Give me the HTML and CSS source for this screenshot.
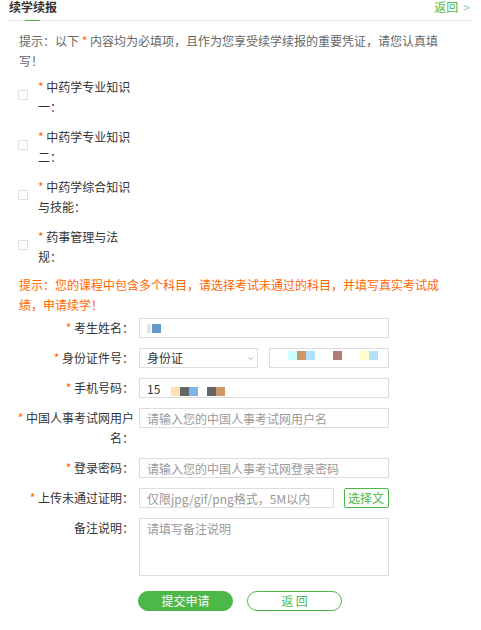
FILE: index.html
```html
<!DOCTYPE html>
<html lang="zh-CN">
<head>
  <meta charset="UTF-8">
  <title>续学续报</title>
  <link rel="stylesheet" href="styles.css">
</head>
<body>

<div class="page">
  <div class="head">
    <h2 class="head-title">续学续报</h2>
    <a class="head-back" href="#">返回 <span class="head-arrow">&gt;</span></a>
  </div>

  <p class="tip">提示：以下 <span class="star">*</span> 内容均为必填项，且作为您享受续学续报的重要凭证，请您认真填写！</p>

  <!-- Subjects to retake -->
  <ul class="subjects">
    <li class="subject">
      <input class="subject-check" type="checkbox" id="sub1">
      <label class="subject-label" for="sub1"><span class="star">*</span> 中药学专业知识一：</label>
    </li>
    <li class="subject">
      <input class="subject-check" type="checkbox" id="sub2">
      <label class="subject-label" for="sub2"><span class="star">*</span> 中药学专业知识二：</label>
    </li>
    <li class="subject">
      <input class="subject-check" type="checkbox" id="sub3">
      <label class="subject-label" for="sub3"><span class="star">*</span> 中药学综合知识与技能：</label>
    </li>
    <li class="subject">
      <input class="subject-check" type="checkbox" id="sub4">
      <label class="subject-label" for="sub4"><span class="star">*</span> 药事管理与法规：</label>
    </li>
  </ul>

  <p class="tip tip-warn">提示：您的课程中包含多个科目，请选择考试未通过的科目，并填写真实考试成绩，申请续学！</p>

  <form class="form">
    <div class="row">
      <label class="row-label"><span class="star">*</span> 考生姓名：</label>
      <div class="row-field masked">
        <input class="input" type="text">
        <span class="mosaic mosaic-name"><span class="c-faint"></span><span class="c-blue"></span></span>
      </div>
    </div>

    <div class="row">
      <label class="row-label"><span class="star">*</span> 身份证件号：</label>
      <div class="row-field row-field-split">
        <div class="select-wrap">
          <select class="input select">
            <option>身份证</option>
          </select>
          <svg class="select-arrow" width="5" height="3" viewBox="0 0 5 3"><polyline points="0.3,0.3 2.5,2.5 4.7,0.3" fill="none" stroke="#999" stroke-width="0.8"/></svg>
        </div>
        <div class="masked masked-id">
          <input class="input" type="text">
          <span class="mosaic mosaic-id"><span class="c-cyan"></span><span class="c-tan"></span><span class="c-sky"></span><span></span><span></span><span class="c-mauve"></span><span></span><span></span><span class="c-cream"></span><span class="c-sky"></span></span>
        </div>
      </div>
    </div>

    <div class="row">
      <label class="row-label"><span class="star">*</span> 手机号码：</label>
      <div class="row-field masked">
        <input class="input" type="text" value="15">
        <span class="mosaic mosaic-phone"><span class="c-peach"></span><span class="c-gray"></span><span class="c-blue2"></span><span></span><span class="c-gray"></span><span class="c-tan"></span></span>
      </div>
    </div>

    <div class="row">
      <label class="row-label"><span class="star">*</span> 中国人事考试网用户名：</label>
      <div class="row-field">
        <input class="input" type="text" placeholder="请输入您的中国人事考试网用户名">
      </div>
    </div>

    <div class="row">
      <label class="row-label"><span class="star">*</span> 登录密码：</label>
      <div class="row-field">
        <input class="input" type="password" placeholder="请输入您的中国人事考试网登录密码">
      </div>
    </div>

    <div class="row">
      <label class="row-label"><span class="star">*</span> 上传未通过证明：</label>
      <div class="row-field">
        <input class="input input-file" type="text" placeholder="仅限jpg/gif/png格式，5M以内" readonly>
        <label class="btn-file">选择文件<input class="file-hidden" type="file"></label>
      </div>
    </div>

    <div class="row">
      <label class="row-label">备注说明：</label>
      <div class="row-field">
        <textarea class="input textarea" placeholder="请填写备注说明"></textarea>
      </div>
    </div>

    <div class="actions">
      <button class="btn btn-submit" type="button">提交申请</button>
      <button class="btn btn-back" type="button">返 回</button>
    </div>
  </form>
</div>

</body>
</html>
```

FILE: styles.css
```css
body {
  margin: 0;
  font-family: "Noto Sans CJK SC", "Liberation Sans", sans-serif;
  font-size: 12px;
  color: #333;
  background: #fff;
}
.page {
  padding: 0 9px;
}

/* Header */
.head {
  display: flex;
  justify-content: space-between;
  align-items: flex-start;
  height: 20px;
  border-bottom: 1px solid #e5e5e5;
}
.head-title {
  position: relative;
  margin: 0;
  font-size: 12px;
  line-height: 13px;
  font-weight: bold;
}
.head-title::after {
  content: "";
  position: absolute;
  left: 16px;
  bottom: -8px;
  width: 15px;
  height: 1px;
  background: #4cb847;
}
.head-back {
  display: flex;
  gap: 5px;
  margin-right: 2px;
  line-height: 13px;
  color: #4cb847;
  text-decoration: none;
}
.head-arrow {
  color: #8fcf8b;
}

/* Tips */
.tip {
  max-width: 425px;
  margin: 10px 0 0;
  padding: 0 10px;
  line-height: 20px;
  color: #666;
}
.tip-warn {
  margin-top: 8px;
  color: #ff6600;
}
.star {
  color: #ff6600;
}

/* Subjects */
.subjects {
  list-style: none;
  margin: 6px 0 0;
  padding: 0 0 0 9px;
}
.subject {
  display: flex;
  align-items: flex-start;
  gap: 10px;
  margin-bottom: 10px;
}
.subject:last-child {
  margin-bottom: 0;
}
.subject-check {
  appearance: none;
  box-sizing: border-box;
  width: 10px;
  height: 10px;
  margin: 13px 0 0;
  border: 1px solid #e0e0e0;
  background: #fff;
}
.subject-label {
  width: 100px;
  line-height: 20px;
}

/* Form */
.form {
  margin-top: 3px;
  padding-left: 5px;
}
.row {
  display: flex;
  gap: 5px;
  margin-bottom: 10px;
}
.row-label {
  flex: none;
  width: 120px;
  text-align: right;
  line-height: 20px;
}
.row-field {
  display: flex;
  gap: 10px;
  width: 250px;
}
.row-field-split {
  gap: 11px;
}
.input {
  box-sizing: border-box;
  width: 100%;
  height: 20px;
  margin: 0;
  padding: 0 7px;
  border: 1px solid #ddd;
  border-radius: 0;
  background: #fff;
  font: inherit;
  line-height: 18px;
  color: #333;
  outline: none;
}
.input::placeholder {
  color: #999;
}
.select-wrap {
  position: relative;
  flex: none;
  width: 119px;
}
.select {
  appearance: none;
}
.select-arrow {
  position: absolute;
  right: 5px;
  top: 9px;
}
.input-file {
  flex: none;
  width: 195px;
}
.btn-file {
  box-sizing: border-box;
  display: block;
  flex: none;
  width: 45px;
  height: 20px;
  padding: 0 3px;
  border: 1px solid #4cb847;
  border-radius: 2px;
  background: #fff;
  color: #4cb847;
  line-height: 18px;
  overflow: hidden;
  cursor: pointer;
}
.file-hidden {
  display: none;
}
.textarea {
  height: 58px;
  line-height: 20px;
  resize: none;
}

/* Masked personal data */
.masked {
  position: relative;
}
.masked-id {
  flex: none;
  width: 120px;
}
.mosaic {
  position: absolute;
  display: flex;
  height: 9px;
  pointer-events: none;
}
.mosaic span {
  width: 9px;
}
.mosaic-name {
  left: 8px;
  top: 6px;
}
.mosaic-name .c-faint {
  width: 4px;
  margin-right: 1px;
}
.mosaic-id {
  left: 19px;
  top: 3px;
}
.mosaic-phone {
  left: 32px;
  top: 9px;
}
.c-faint { background: #e4e4e4; }
.c-blue { background: #6699cc; }
.c-blue2 { background: #80b3e6; }
.c-cyan { background: #ccffff; }
.c-tan { background: #cc9966; }
.c-sky { background: #b3e0ff; }
.c-mauve { background: #b37a7a; }
.c-cream { background: #ffffcc; }
.c-peach { background: #ffe0b3; }
.c-gray { background: #666; }

/* Buttons */
.actions {
  display: flex;
  gap: 14px;
  padding: 5px 0 0 124px;
}
.btn {
  box-sizing: border-box;
  width: 95px;
  height: 20px;
  padding: 0;
  border: 1px solid #4cb847;
  border-radius: 10px;
  font: inherit;
  line-height: 18px;
  cursor: pointer;
}
.btn-submit {
  background: #4cb847;
  color: #fff;
}
.btn-back {
  background: #fff;
  color: #4cb847;
}
```
